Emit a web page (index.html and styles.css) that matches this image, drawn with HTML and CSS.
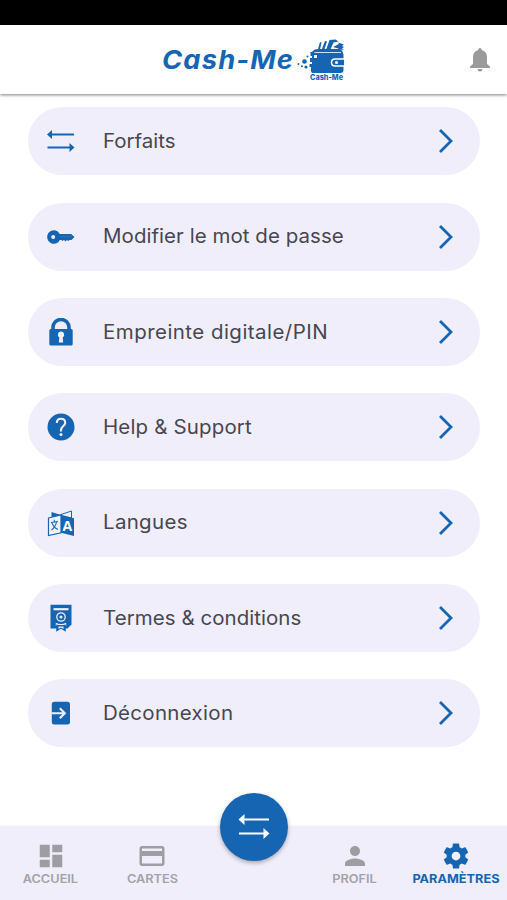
FILE: index.html
```html
<!DOCTYPE html>
<html lang="fr">
<head>
<meta charset="utf-8">
<title>Cash-Me</title>
<link rel="stylesheet" href="styles.css">
</head>
<body>
<div class="app">
  <div class="statusbar"></div>
  <header class="header">
    <div class="brand">
      <span class="brand-name">Cash-Me</span>
      <svg class="logo" width="48" height="44" viewBox="0 0 48 44">
        <g fill="#1565b3">
          <circle cx="1.500" cy="26" r="1"/><circle cx="7.500" cy="23.500" r="2.300"/><circle cx="5" cy="28.300" r="1"/><circle cx="9" cy="29" r="1.600"/><circle cx="10.500" cy="18.500" r="1"/>
          <path d="M16 14h27.500q3 0 3 3v15q0 3-3 3H16q-2 0-2-2v-4h-1.500v-3H15v-2h-2v-4h2v-2h-1.500v-4H16z"/>
          <path d="m21 11 2-7 1.500.5-1.500 7zM24.500 12l3.500-9 2 .5-3 9zM29 12l3.500-10 6-.5 3 2-5 1-3.500 8zM36 9l6-3-1-1.500 6 2-2 1.500 2 1-2 1.500 2 1.500-4-.5-2-1z"/>
          <path d="M15 14q2-3 6-3h21q3 0 4 4H15z"/>
        </g>
        <path d="M17.500 14.500H44" stroke="#fff" stroke-width=".8"/>
        <path d="M17 17h3v3h-3z" fill="#fff"/>
        <path d="M47 21h-9q-3.500 0-3.500 3.500T38 28h9" fill="#1565b3" stroke="#fff" stroke-width="1.500"/>
        <circle cx="39.500" cy="24.500" r="1.500" fill="#fff"/>
        <text x="13" y="41.500" textLength="33" lengthAdjust="spacingAndGlyphs" class="logo-text">Cash-Me</text>
      </svg>
    </div>
    <svg class="bell" width="20" height="24" viewBox="0 0 20 24" fill="#9a9a9a"><path d="M10 0c1 0 1.700.7 1.700 1.900C15 2.700 17 5.500 17 9v7l3 2.500V20H0v-1.500L3 16V9c0-3.500 2-6.300 5.300-7.100C8.300.7 9 0 10 0zM7.500 21h5q-.3 2.500-2.500 2.500T7.500 21z"/></svg>
  </header>

  <main class="menu">
    <a class="row">
      <svg class="icon" viewBox="0 0 28 28" fill="#1565b3"><path d="M0 7.500l5-4.500V6.500h22v2H5V12zM27.500 20.500l-5-4.500v3.500H.5v2h22V25z"/></svg>
      <span class="label l1">Forfaits</span>
      <svg class="chev" viewBox="0 0 16 26"><path d="m2 2 11 11L2 24"/></svg>
    </a>
    <a class="row">
      <svg class="icon" viewBox="0 0 28 28" fill="#1565b3"><path fill-rule="evenodd" d="M7 7.200c2.700 0 4.600 1.300 5.700 3.800h11.500l3.300 3-3 3h-2l-1.200 1-1.500-1-1.300 1.500-1.500-1.500-1.500 1-1-1h-1.800c-1.100 2.500-3 3.800-5.700 3.800C3 20.800.2 17.700.2 14S3 7.200 7 7.200zM6.200 12a2 2 0 1 0 0 4 2 2 0 0 0 0-4z"/><path d="M14 13.500h11" stroke="#3f82c4" stroke-width=".5"/></svg>
      <span class="label l2">Modifier le mot de passe</span>
      <svg class="chev" viewBox="0 0 16 26"><path d="m2 2 11 11L2 24"/></svg>
    </a>
    <a class="row">
      <svg class="icon" viewBox="0 0 28 28"><path d="M6 14V9.500a8 8 0 0 1 16 0V14" fill="none" stroke="#1565b3" stroke-width="3.600"/><rect x="2.300" y="11" width="23.400" height="16.500" rx="1.500" fill="#1565b3"/><path d="M14 13.500a3.200 3.200 0 0 1 1.700 5.900l.5 5.200h-4.400l.5-5.200a3.200 3.200 0 0 1 1.700-5.900z" fill="#f0eefb"/></svg>
      <span class="label l3">Empreinte digitale/PIN</span>
      <svg class="chev" viewBox="0 0 16 26"><path d="m2 2 11 11L2 24"/></svg>
    </a>
    <a class="row">
      <svg class="icon" viewBox="0 0 28 28"><circle cx="14" cy="14" r="13.500" fill="#1565b3"/><path d="M9.800 10c.1-2.700 1.700-4.200 4.200-4.200s4.200 1.500 4.200 3.900c0 3.300-4.200 3.600-4.200 7.500v1.300" fill="none" stroke="#f0eefb" stroke-width="2.100"/><circle cx="14" cy="21.500" r="1.500" fill="#f0eefb"/></svg>
      <span class="label l4">Help &amp; Support</span>
      <svg class="chev" viewBox="0 0 16 26"><path d="m2 2 11 11L2 24"/></svg>
    </a>
    <a class="row">
      <svg class="icon" viewBox="0 0 28 28"><path d="M4.500 3 14 6v18l-9.500-2z" fill="#1565b3"/><path d="m14 5.500 10.500-3.500V9L14 7z" fill="#f0eefb" stroke="#1565b3"/><path d="M1.500 9 14 5.800v18L1.500 26.500z" fill="#f4f2fc" stroke="#1565b3" stroke-width="1.200"/><path d="m14 5.800 13 3.500V27l-13-3.200z" fill="#1565b3"/><path d="M4 13.500l7-1M7.300 10.800v2M9.500 13q-1 5-5 8M5 14q2 5 6 6.500" fill="none" stroke="#1565b3" stroke-width="1.100"/><text x="20.400" y="21.500" class="glyph-a">A</text></svg>
      <span class="label l5">Langues</span>
      <svg class="chev" viewBox="0 0 16 26"><path d="m2 2 11 11L2 24"/></svg>
    </a>
    <a class="row">
      <svg class="icon" viewBox="0 0 28 28"><path d="M3.500.8h21v19.700l-4 4h-17z" fill="#1565b3"/><g fill="none" stroke="#f0eefb"><path d="M6.500 5.200h15" stroke-width="2.200"/><circle cx="14" cy="13" r="4.200" stroke-width="1.300"/></g><circle cx="14" cy="13" r="1.500" fill="#f0eefb"/><path d="M8.800 18.800q5 2.500 10.400 0V22H8.800z" fill="#f0eefb"/><path d="M9.200 20.500q4.800 1 9.600 0v7.300L14 24.800l-4.800 3z" fill="#1565b3"/><path d="M11.500 22.500v2.500l2.500-1.500 2.500 1.500v-2.500z" fill="#f0eefb"/></svg>
      <span class="label l6">Termes &amp; conditions</span>
      <svg class="chev" viewBox="0 0 16 26"><path d="m2 2 11 11L2 24"/></svg>
    </a>
    <a class="row">
      <svg class="icon" viewBox="0 0 28 28"><rect x="4.800" y="2.800" width="18.200" height="22.600" rx="2.500" fill="#1565b3"/><path d="M4.500 14.200h13M12.800 9.200l5 5-5 5" fill="none" stroke="#f0eefb" stroke-width="2.100"/></svg>
      <span class="label l7">Déconnexion</span>
      <svg class="chev" viewBox="0 0 16 26"><path d="m2 2 11 11L2 24"/></svg>
    </a>
  </main>

  <nav class="nav">
    <a class="tab"><svg width="30" height="30" viewBox="0 0 24 24"><path d="M3 13h8V3H3v10zm0 8h8v-6H3v6zm10 0h8V11h-8v10zm0-18v6h8V3h-8z"/></svg><span class="tab-label">ACCUEIL</span></a>
    <a class="tab"><svg width="30" height="30" viewBox="0 0 24 24"><path d="M20 4H4c-1.110 0-1.990.89-1.990 2L2 18c0 1.110.89 2 2 2h16c1.110 0 2-.89 2-2V6c0-1.110-.89-2-2-2zm0 14H4v-6h16v6zm0-10H4V6h16v2z"/></svg><span class="tab-label">CARTES</span></a>
    <span></span>
    <a class="tab"><svg width="30" height="30" viewBox="0 0 24 24"><path d="M12 12c2.210 0 4-1.790 4-4s-1.790-4-4-4-4 1.790-4 4 1.790 4 4 4zm0 2c-2.670 0-8 1.340-8 4v2h16v-2c0-2.660-5.330-4-8-4z"/></svg><span class="tab-label">PROFIL</span></a>
    <a class="tab active"><svg width="30" height="30" viewBox="0 0 24 24"><path d="M19.430 12.980c.04-.32.070-.64.070-.98s-.03-.66-.07-.98l2.110-1.650c.19-.15.24-.42.12-.64l-2-3.460c-.12-.22-.39-.3-.61-.22l-2.490 1c-.52-.4-1.080-.73-1.690-.98l-.38-2.650C14.460 2.180 14.250 2 14 2h-4c-.25 0-.46.18-.49.42l-.38 2.650c-.61.25-1.170.59-1.690.98l-2.490-1c-.23-.09-.49 0-.61.22l-2 3.460c-.13.22-.07.49.12.64l2.110 1.650c-.04.32-.07.65-.07.98s.03.66.07.98l-2.110 1.650c-.19.15-.24.42-.12.64l2 3.460c.12.22.39.3.61.22l2.490-1c.52.4 1.080.73 1.690.98l.38 2.650c.03.24.24.42.49.42h4c.25 0 .46-.18.49-.42l.38-2.650c.61-.25 1.170-.59 1.690-.98l2.490 1c.23.09.49 0 .61-.22l2-3.460c.12-.22.07-.49-.12-.64l-2.110-1.650zM12 15.500c-1.930 0-3.500-1.570-3.500-3.500s1.570-3.500 3.500-3.500 3.500 1.570 3.500 3.500-1.570 3.500-3.500 3.500z"/></svg><span class="tab-label">PARAMÈTRES</span></a>
    <a class="fab"><svg width="32" height="28" viewBox="0 0 32 28" fill="#fff"><path d="M.5 6.500 6.500 1v4.500H31v2H6.500V12zM31.500 20.500l-6-5.500v4.500H1v2h24.500V26z"/></svg></a>
  </nav>
</div>
</body>
</html>
```
FILE: styles.css
```css
* { box-sizing: border-box; }
body {
  margin: 0;
  background: #fff;
  font-family: Inter, "Open Sans", sans-serif;
}
.app {
  width: 507px;
  height: 900px;
  display: flex;
  flex-direction: column;
  overflow: hidden;
}
.statusbar { height: 25px; background: #000; flex: none; }
.header {
  height: 69px;
  flex: none;
  display: flex;
  align-items: center;
  justify-content: space-between;
  padding: 0 17px 0 162px;
  box-shadow: 0 1px 3px rgba(0, 0, 0, .5);
}
.brand { display: flex; align-items: center; gap: 4px; }
.brand-name {
  width: 131px;
  font-size: 26px;
  font-weight: 700;
  font-style: italic;
  letter-spacing: 1.100px;
  white-space: nowrap;
  color: #1565b3;
  transform: scaleX(1.050);
  transform-origin: left;
}
.logo-text { font: 800 7.500px Inter, sans-serif; fill: #1565b3; }
.glyph-a { font: 700 14px "Open Sans", sans-serif; fill: #fff; text-anchor: middle; }
.menu {
  flex: 1;
  display: flex;
  flex-direction: column;
  gap: 27.350px;
  padding: 13.400px 27px 0 28px;
}
.row {
  height: 68px;
  flex: none;
  display: flex;
  align-items: center;
  padding: 0 26px 0 19px;
  border-radius: 34px;
  background: #f0eefb;
}
.icon { width: 28px; height: 28px; flex: none; }
.label {
  flex: 1;
  margin-left: 28px;
  font-size: 19.500px;
  line-height: 28px;
  padding-bottom: 1px;
  white-space: nowrap;
  color: #48464f;
  transform: scaleX(1.050);
  transform-origin: left;
}
.l1 { letter-spacing: 0; }
.l2 { letter-spacing: .05px; }
.l3 { letter-spacing: .44px; }
.l4 { letter-spacing: .15px; }
.l5 { letter-spacing: .3px; }
.l6 { letter-spacing: .05px; }
.l7 { letter-spacing: .3px; }
.chev { width: 16px; height: 26px; fill: none; stroke: #1565b3; stroke-width: 2.800; }
.nav {
  position: relative;
  height: 74px;
  flex: none;
  display: grid;
  grid-template-columns: repeat(5, 1fr);
  background: #f0eefb;
  box-shadow: 0 -1px 2px rgba(0, 0, 0, .04);
}
.tab {
  display: flex;
  flex-direction: column;
  align-items: center;
  padding-top: 15px;
  font-size: 11.700px;
  font-weight: 600;
  line-height: 16px;
  color: #a3a2a8;
  fill: #9e9da1;
}
.tab.active { color: #1565b3; fill: #1565b3; font-weight: 700; }
.tab svg { flex: none; }
.tab-label { transform: scaleX(1.090); }
.fab {
  position: absolute;
  left: 219.500px;
  top: -33px;
  width: 68px;
  height: 68px;
  border-radius: 50%;
  display: flex;
  align-items: center;
  justify-content: center;
  background: #1565b3;
  box-shadow: 0 2px 4px rgba(0, 0, 0, .3);
}
```
